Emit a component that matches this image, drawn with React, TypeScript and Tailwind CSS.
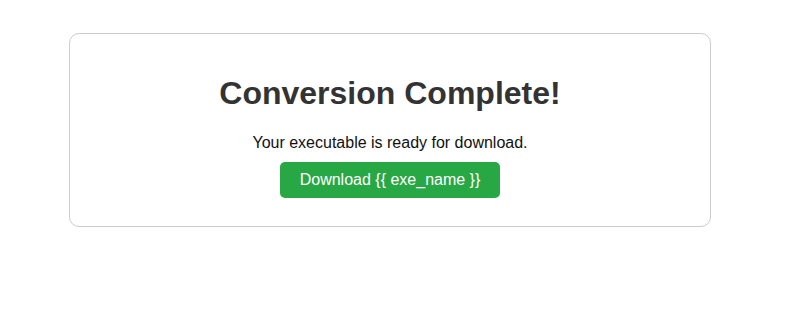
export default function App() {
  return (
    <div className="min-h-[316px] bg-white pt-[33px] pl-[69px]" style={{ fontFamily: '"Liberation Sans", Arial, sans-serif' }}>
      <div className="flex w-[642px] flex-col items-center rounded-[10px] border border-[#cccccc] pt-[41px] pb-[28px]">
        <h1 className="text-[32px] leading-[37px] font-bold text-[#333333]">Conversion Complete!</h1>
        <p className="mt-[22px] text-[16px] leading-[18px] text-[#111111]">Your executable is ready for download.</p>
        <a
          href="#"
          className="mt-[10px] inline-block rounded-[5px] bg-[#28a745] px-[20px] py-[9px] text-[16px] leading-[18px] text-white"
        >
          Download {"{{ exe_name }}"}
        </a>
      </div>
    </div>
  );
}
